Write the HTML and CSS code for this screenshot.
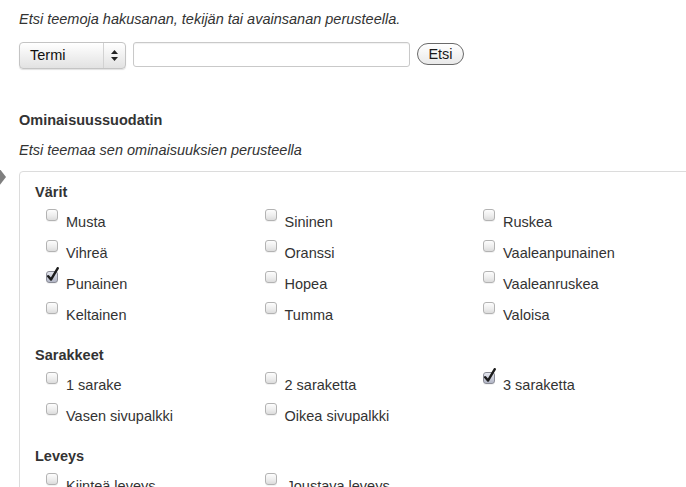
FILE: index.html
```html
<!DOCTYPE html>
<html lang="fi">
<head>
<meta charset="utf-8">
<title>Teemahaku</title>
<link rel="stylesheet" href="styles.css">
</head>
<body>
<div class="page">
  <p class="intro">Etsi teemoja hakusanan, tekijän tai avainsanan perusteella.</p>
  <form class="search">
    <div class="select">
      <span class="select-label">Termi</span>
      <span class="select-arrows">
        <svg width="7" height="11" viewBox="0 0 7 11"><path d="M3.5 0 L7 4 L0 4 Z M0 7 L7 7 L3.5 11 Z" fill="#222"/></svg>
      </span>
    </div>
    <input class="text" type="text">
    <button class="btn" type="button">Etsi</button>
  </form>

  <h3 class="filter-title">Ominaisuussuodatin</h3>
  <p class="filter-desc">Etsi teemaa sen ominaisuuksien perusteella</p>

  <div class="box">
    <span class="arrow"></span>
    <div class="group">
      <h4 class="group-title">Värit</h4>
      <ul class="opts">
        <li><span class="cb"></span><span class="lbl">Musta</span></li>
        <li><span class="cb"></span><span class="lbl">Sininen</span></li>
        <li><span class="cb"></span><span class="lbl">Ruskea</span></li>
        <li><span class="cb"></span><span class="lbl">Vihreä</span></li>
        <li><span class="cb"></span><span class="lbl">Oranssi</span></li>
        <li><span class="cb"></span><span class="lbl">Vaaleanpunainen</span></li>
        <li><span class="cb checked"><svg class="tick" width="14" height="16" viewBox="0 0 14 16"><path d="M2.2 9.2 L5 12.6 L11.8 1.2" fill="none" stroke="#1c1c1c" stroke-width="2.4" stroke-linecap="round" stroke-linejoin="round"/></svg></span><span class="lbl">Punainen</span></li>
        <li><span class="cb"></span><span class="lbl">Hopea</span></li>
        <li><span class="cb"></span><span class="lbl">Vaaleanruskea</span></li>
        <li><span class="cb"></span><span class="lbl">Keltainen</span></li>
        <li><span class="cb"></span><span class="lbl">Tumma</span></li>
        <li><span class="cb"></span><span class="lbl">Valoisa</span></li>
      </ul>
    </div>
    <div class="group">
      <h4 class="group-title">Sarakkeet</h4>
      <ul class="opts">
        <li><span class="cb"></span><span class="lbl">1 sarake</span></li>
        <li><span class="cb"></span><span class="lbl">2 saraketta</span></li>
        <li><span class="cb checked"><svg class="tick" width="14" height="16" viewBox="0 0 14 16"><path d="M2.2 9.2 L5 12.6 L11.8 1.2" fill="none" stroke="#1c1c1c" stroke-width="2.4" stroke-linecap="round" stroke-linejoin="round"/></svg></span><span class="lbl">3 saraketta</span></li>
        <li><span class="cb"></span><span class="lbl">Vasen sivupalkki</span></li>
        <li><span class="cb"></span><span class="lbl">Oikea sivupalkki</span></li>
      </ul>
    </div>
    <div class="group">
      <h4 class="group-title">Leveys</h4>
      <ul class="opts">
        <li><span class="cb"></span><span class="lbl">Kiinteä leveys</span></li>
        <li><span class="cb"></span><span class="lbl lbl-shift">Joustava leveys</span></li>
      </ul>
    </div>
  </div>
</div>
</body>
</html>
```

FILE: styles.css
```css
html {
  overflow: hidden;
}

body {
  margin: 0;
  background: #fff;
  color: #333;
  font-family: "Liberation Sans", Arial, Helvetica, sans-serif;
  font-size: 14.5px;
  line-height: 18px;
}

.page {
  padding: 10px 0 0 19px;
}

.intro,
.filter-desc {
  margin: 0;
  font-style: italic;
  color: #333;
}

.search {
  display: flex;
  align-items: flex-start;
  gap: 7px;
  margin: 14px 0 0;
}

.select {
  box-sizing: border-box;
  width: 107px;
  height: 27px;
  display: flex;
  align-items: stretch;
  border: 1px solid #c4c4c4;
  border-radius: 4px;
  background: linear-gradient(#ffffff, #f2f2f2 45%, #e2e2e2);
  box-shadow: 0 1px 1px rgba(0, 0, 0, 0.12);
}

.select-label {
  flex: 1;
  padding-left: 10px;
  line-height: 25px;
  color: #111;
}

.select-arrows {
  width: 21px;
  border-left: 1px solid #d2d2d2;
  display: flex;
  align-items: center;
  justify-content: center;
}

.text {
  box-sizing: border-box;
  width: 277px;
  height: 25px;
  margin: 0;
  border: 1px solid #c9c9c9;
  border-radius: 3px;
  background: #fff;
  box-shadow: inset 0 1px 1px rgba(0, 0, 0, 0.06);
  padding: 0 4px;
  font: inherit;
}

.btn {
  box-sizing: border-box;
  width: 47px;
  height: 22px;
  margin: 1px 0 0;
  padding: 0;
  border: 1px solid #6a6a6a;
  border-radius: 11px;
  background: linear-gradient(#ffffff, #f4f4f4 50%, #e9e9e9);
  font: inherit;
  line-height: 20px;
  color: #1a1a1a;
}

.filter-title {
  margin: 42px 0 0;
  font-size: 14.5px;
  line-height: 18px;
  font-weight: bold;
  color: #333;
}

.filter-desc {
  margin-top: 12px;
}

.box {
  position: relative;
  margin-top: 12px;
  width: 720px;
  border: 1px solid #dcdcdc;
  border-radius: 4px 0 0 0;
  padding: 11px 0 0 15px;
}

.arrow {
  position: absolute;
  left: -21px;
  top: -4px;
  width: 0;
  height: 0;
  border-left: 7px solid #7f7f7f;
  border-top: 9px solid transparent;
  border-bottom: 9px solid transparent;
}

.group + .group {
  margin-top: 15px;
}

.group-title {
  margin: 0;
  font-size: 14.5px;
  line-height: 18px;
  font-weight: bold;
  color: #333;
}

.opts {
  list-style: none;
  margin: 6px 0 0 11px;
  padding: 0;
  display: grid;
  grid-template-columns: repeat(3, 218.5px);
}

.opts li {
  height: 31px;
  display: flex;
  align-items: flex-start;
}

.cb {
  position: relative;
  box-sizing: border-box;
  flex: none;
  width: 12px;
  height: 12px;
  margin-top: 2px;
  border: 1px solid #b3b3b3;
  border-radius: 3px;
  background: linear-gradient(#fdfdfd, #ececec 60%, #dcdcdc);
  box-shadow: 0 1px 0 rgba(0, 0, 0, 0.05);
}

.cb.checked {
  border-color: #8a8c96;
  background: linear-gradient(#e4e6ee, #c6c9d6 60%, #b2b6c6);
}

.tick {
  position: absolute;
  left: -1px;
  top: -5px;
}

.lbl {
  margin: 6px 0 0 8px;
  color: #333;
}

.lbl-shift {
  margin-left: 10px;
}
```
